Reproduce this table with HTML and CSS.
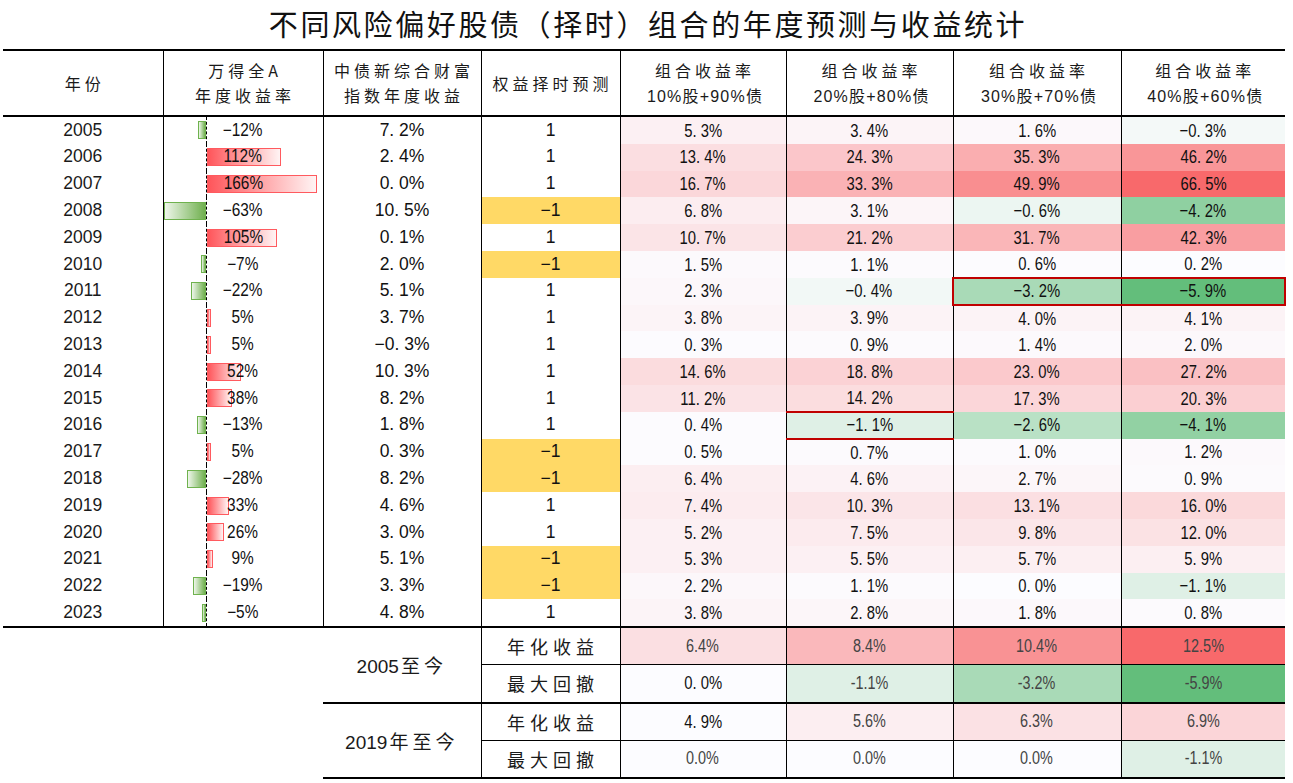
FILE: index.html
```html
<!DOCTYPE html>
<html lang="zh-CN">
<head>
<meta charset="utf-8">
<title>不同风险偏好股债（择时）组合的年度预测与收益统计</title>
<link rel="stylesheet" href="styles.css">
</head>
<body>
<div class="page">
  <h1 class="title">不同风险偏好股债（择时）组合的年度预测与收益统计</h1>
  <table class="grid">
    <colgroup>
      <col class="c1"><col class="c2"><col class="c3"><col class="c4"><col class="c5"><col class="c6"><col class="c7"><col class="c8">
    </colgroup>
    <thead>
      <tr class="head">
        <th class="first">年份</th>
        <th>万得全A<br>年度收益率</th>
        <th>中债新综合财富<br>指数年度收益</th>
        <th>权益择时预测</th>
        <th>组合收益率<br><span class="mix">10%股+90%债</span></th>
        <th>组合收益率<br><span class="mix">20%股+80%债</span></th>
        <th>组合收益率<br><span class="mix">30%股+70%债</span></th>
        <th>组合收益率<br><span class="mix">40%股+60%债</span></th>
      </tr>
    </thead>
    <tbody class="data">
      <tr><td class="yr">2005</td><td class="bar"><div class="bc"><i class="neg" style="width:8px"></i><i class="ax"></i><span class="bl">−12%</span></div></td><td class="bd">7. 2%</td><td class="sg">1</td>
        <td class="h" style="background:rgb(252,240,243)"><span class="n">5. 3%</span></td><td class="h" style="background:rgb(252,244,247)"><span class="n">3. 4%</span></td><td class="h" style="background:rgb(252,248,251)"><span class="n">1. 6%</span></td><td class="h" style="background:rgb(244,249,248)"><span class="n">−0. 3%</span></td></tr>
      <tr><td class="yr">2006</td><td class="bar"><div class="bc"><i class="ax"></i><i class="pos" style="width:74px"></i><span class="bl">112%</span></div></td><td class="bd">2. 4%</td><td class="sg">1</td>
        <td class="h" style="background:rgb(251,222,225)"><span class="n">13. 4%</span></td><td class="h" style="background:rgb(251,198,202)"><span class="n">24. 3%</span></td><td class="h" style="background:rgb(250,174,176)"><span class="n">35. 3%</span></td><td class="h" style="background:rgb(249,150,152)"><span class="n">46. 2%</span></td></tr>
      <tr><td class="yr">2007</td><td class="bar"><div class="bc"><i class="ax"></i><i class="pos" style="width:110px"></i><span class="bl">166%</span></div></td><td class="bd">0. 0%</td><td class="sg">1</td>
        <td class="h" style="background:rgb(251,215,218)"><span class="n">16. 7%</span></td><td class="h" style="background:rgb(250,178,181)"><span class="n">33. 3%</span></td><td class="h" style="background:rgb(249,142,144)"><span class="n">49. 9%</span></td><td class="h" style="background:rgb(248,105,107)"><span class="n">66. 5%</span></td></tr>
      <tr><td class="yr">2008</td><td class="bar"><div class="bc"><i class="neg" style="width:42px"></i><i class="ax"></i><span class="bl">−63%</span></div></td><td class="bd">10. 5%</td><td class="sg down">−1</td>
        <td class="h" style="background:rgb(252,237,240)"><span class="n">6. 8%</span></td><td class="h" style="background:rgb(252,245,248)"><span class="n">3. 1%</span></td><td class="h" style="background:rgb(236,246,242)"><span class="n">−0. 6%</span></td><td class="h" style="background:rgb(143,208,161)"><span class="n">−4. 2%</span></td></tr>
      <tr><td class="yr">2009</td><td class="bar"><div class="bc"><i class="ax"></i><i class="pos" style="width:70px"></i><span class="bl">105%</span></div></td><td class="bd">0. 1%</td><td class="sg">1</td>
        <td class="h" style="background:rgb(251,228,231)"><span class="n">10. 7%</span></td><td class="h" style="background:rgb(251,205,208)"><span class="n">21. 2%</span></td><td class="h" style="background:rgb(250,182,184)"><span class="n">31. 7%</span></td><td class="h" style="background:rgb(249,158,161)"><span class="n">42. 3%</span></td></tr>
      <tr><td class="yr">2010</td><td class="bar"><div class="bc"><i class="neg" style="width:5px"></i><i class="ax"></i><span class="bl">−7%</span></div></td><td class="bd">2. 0%</td><td class="sg down">−1</td>
        <td class="h" style="background:rgb(252,249,252)"><span class="n">1. 5%</span></td><td class="h" style="background:rgb(252,250,253)"><span class="n">1. 1%</span></td><td class="h" style="background:rgb(252,251,254)"><span class="n">0. 6%</span></td><td class="h" style="background:rgb(252,252,255)"><span class="n">0. 2%</span></td></tr>
      <tr><td class="yr">2011</td><td class="bar"><div class="bc"><i class="neg" style="width:15px"></i><i class="ax"></i><span class="bl">−22%</span></div></td><td class="bd">5. 1%</td><td class="sg">1</td>
        <td class="h" style="background:rgb(252,247,250)"><span class="n">2. 3%</span></td><td class="h" style="background:rgb(242,248,246)"><span class="n">−0. 4%</span></td><td class="h mark-l" style="background:rgb(169,218,183)"><span class="n">−3. 2%</span></td><td class="h mark-r" style="background:rgb(99,190,123)"><span class="n">−5. 9%</span></td></tr>
      <tr><td class="yr">2012</td><td class="bar"><div class="bc"><i class="ax"></i><i class="pos" style="width:4px"></i><span class="bl">5%</span></div></td><td class="bd">3. 7%</td><td class="sg">1</td>
        <td class="h" style="background:rgb(252,244,247)"><span class="n">3. 8%</span></td><td class="h" style="background:rgb(252,243,246)"><span class="n">3. 9%</span></td><td class="h" style="background:rgb(252,243,246)"><span class="n">4. 0%</span></td><td class="h" style="background:rgb(252,243,246)"><span class="n">4. 1%</span></td></tr>
      <tr><td class="yr">2013</td><td class="bar"><div class="bc"><i class="ax"></i><i class="pos" style="width:4px"></i><span class="bl">5%</span></div></td><td class="bd">−0. 3%</td><td class="sg">1</td>
        <td class="h" style="background:rgb(252,251,254)"><span class="n">0. 3%</span></td><td class="h" style="background:rgb(252,250,253)"><span class="n">0. 9%</span></td><td class="h" style="background:rgb(252,249,252)"><span class="n">1. 4%</span></td><td class="h" style="background:rgb(252,248,251)"><span class="n">2. 0%</span></td></tr>
      <tr><td class="yr">2014</td><td class="bar"><div class="bc"><i class="ax"></i><i class="pos" style="width:34px"></i><span class="bl">52%</span></div></td><td class="bd">10. 3%</td><td class="sg">1</td>
        <td class="h" style="background:rgb(251,220,222)"><span class="n">14. 6%</span></td><td class="h" style="background:rgb(251,210,213)"><span class="n">18. 8%</span></td><td class="h" style="background:rgb(251,201,204)"><span class="n">23. 0%</span></td><td class="h" style="background:rgb(250,192,195)"><span class="n">27. 2%</span></td></tr>
      <tr><td class="yr">2015</td><td class="bar"><div class="bc"><i class="ax"></i><i class="pos" style="width:25px"></i><span class="bl">38%</span></div></td><td class="bd">8. 2%</td><td class="sg">1</td>
        <td class="h" style="background:rgb(251,227,230)"><span class="n">11. 2%</span></td><td class="h" style="background:rgb(251,221,223)"><span class="n">14. 2%</span></td><td class="h" style="background:rgb(251,214,217)"><span class="n">17. 3%</span></td><td class="h" style="background:rgb(251,207,210)"><span class="n">20. 3%</span></td></tr>
      <tr><td class="yr">2016</td><td class="bar"><div class="bc"><i class="neg" style="width:9px"></i><i class="ax"></i><span class="bl">−13%</span></div></td><td class="bd">1. 8%</td><td class="sg">1</td>
        <td class="h" style="background:rgb(252,251,254)"><span class="n">0. 4%</span></td><td class="h mark-tb" style="background:rgb(223,240,230)"><span class="n">−1. 1%</span></td><td class="h" style="background:rgb(185,225,197)"><span class="n">−2. 6%</span></td><td class="h" style="background:rgb(146,209,163)"><span class="n">−4. 1%</span></td></tr>
      <tr><td class="yr">2017</td><td class="bar"><div class="bc"><i class="ax"></i><i class="pos" style="width:4px"></i><span class="bl">5%</span></div></td><td class="bd">0. 3%</td><td class="sg down">−1</td>
        <td class="h" style="background:rgb(252,251,254)"><span class="n">0. 5%</span></td><td class="h" style="background:rgb(252,250,253)"><span class="n">0. 7%</span></td><td class="h" style="background:rgb(252,250,253)"><span class="n">1. 0%</span></td><td class="h" style="background:rgb(252,249,252)"><span class="n">1. 2%</span></td></tr>
      <tr><td class="yr">2018</td><td class="bar"><div class="bc"><i class="neg" style="width:19px"></i><i class="ax"></i><span class="bl">−28%</span></div></td><td class="bd">8. 2%</td><td class="sg down">−1</td>
        <td class="h" style="background:rgb(252,238,241)"><span class="n">6. 4%</span></td><td class="h" style="background:rgb(252,242,245)"><span class="n">4. 6%</span></td><td class="h" style="background:rgb(252,246,249)"><span class="n">2. 7%</span></td><td class="h" style="background:rgb(252,250,253)"><span class="n">0. 9%</span></td></tr>
      <tr><td class="yr">2019</td><td class="bar"><div class="bc"><i class="ax"></i><i class="pos" style="width:22px"></i><span class="bl">33%</span></div></td><td class="bd">4. 6%</td><td class="sg">1</td>
        <td class="h" style="background:rgb(252,236,239)"><span class="n">7. 4%</span></td><td class="h" style="background:rgb(251,229,232)"><span class="n">10. 3%</span></td><td class="h" style="background:rgb(251,223,226)"><span class="n">13. 1%</span></td><td class="h" style="background:rgb(251,217,219)"><span class="n">16. 0%</span></td></tr>
      <tr><td class="yr">2020</td><td class="bar"><div class="bc"><i class="ax"></i><i class="pos" style="width:17px"></i><span class="bl">26%</span></div></td><td class="bd">3. 0%</td><td class="sg">1</td>
        <td class="h" style="background:rgb(252,240,243)"><span class="n">5. 2%</span></td><td class="h" style="background:rgb(252,235,238)"><span class="n">7. 5%</span></td><td class="h" style="background:rgb(251,230,233)"><span class="n">9. 8%</span></td><td class="h" style="background:rgb(251,226,228)"><span class="n">12. 0%</span></td></tr>
      <tr><td class="yr">2021</td><td class="bar"><div class="bc"><i class="ax"></i><i class="pos" style="width:6px"></i><span class="bl">9%</span></div></td><td class="bd">5. 1%</td><td class="sg down">−1</td>
        <td class="h" style="background:rgb(252,240,243)"><span class="n">5. 3%</span></td><td class="h" style="background:rgb(252,240,243)"><span class="n">5. 5%</span></td><td class="h" style="background:rgb(252,239,242)"><span class="n">5. 7%</span></td><td class="h" style="background:rgb(252,239,242)"><span class="n">5. 9%</span></td></tr>
      <tr><td class="yr">2022</td><td class="bar"><div class="bc"><i class="neg" style="width:13px"></i><i class="ax"></i><span class="bl">−19%</span></div></td><td class="bd">3. 3%</td><td class="sg down">−1</td>
        <td class="h" style="background:rgb(252,247,250)"><span class="n">2. 2%</span></td><td class="h" style="background:rgb(252,250,253)"><span class="n">1. 1%</span></td><td class="h" style="background:rgb(252,252,255)"><span class="n">0. 0%</span></td><td class="h" style="background:rgb(223,240,230)"><span class="n">−1. 1%</span></td></tr>
      <tr><td class="yr">2023</td><td class="bar"><div class="bc"><i class="neg" style="width:4px"></i><i class="ax"></i><span class="bl">−5%</span></div></td><td class="bd">4. 8%</td><td class="sg">1</td>
        <td class="h" style="background:rgb(252,244,247)"><span class="n">3. 8%</span></td><td class="h" style="background:rgb(252,246,249)"><span class="n">2. 8%</span></td><td class="h" style="background:rgb(252,248,251)"><span class="n">1. 8%</span></td><td class="h" style="background:rgb(252,250,253)"><span class="n">0. 8%</span></td></tr>
    </tbody>
    <tbody class="sum">
      <tr>
        <td class="blank" colspan="2" rowspan="4"></td>
        <td class="period" rowspan="2">2005<span class="cj">至今</span></td>
        <td class="lab">年化收益</td>
        <td class="sv" style="background:rgb(251,223,226)"><span class="n soft">6.4%</span></td>
        <td class="sv" style="background:rgb(250,184,187)"><span class="n soft">8.4%</span></td>
        <td class="sv" style="background:rgb(249,146,148)"><span class="n soft">10.4%</span></td>
        <td class="sv" style="background:rgb(248,105,107)"><span class="n soft">12.5%</span></td>
      </tr>
      <tr class="end">
        <td class="lab">最大回撤</td>
        <td class="sv" style="background:rgb(252,252,255)"><span class="n">0. 0%</span></td>
        <td class="sv" style="background:rgb(223,240,230)"><span class="n soft">-1.1%</span></td>
        <td class="sv" style="background:rgb(169,218,183)"><span class="n soft">-3.2%</span></td>
        <td class="sv" style="background:rgb(99,190,123)"><span class="n soft">-5.9%</span></td>
      </tr>
      <tr>
        <td class="period" rowspan="2">2019<span class="cj">年至今</span></td>
        <td class="lab">年化收益</td>
        <td class="sv" style="background:rgb(252,252,255)"><span class="n">4. 9%</span></td>
        <td class="sv" style="background:rgb(252,238,241)"><span class="n soft">5.6%</span></td>
        <td class="sv" style="background:rgb(251,225,228)"><span class="n soft">6.3%</span></td>
        <td class="sv" style="background:rgb(251,213,216)"><span class="n soft">6.9%</span></td>
      </tr>
      <tr class="end">
        <td class="lab">最大回撤</td>
        <td class="sv" style="background:rgb(252,252,255)"><span class="n soft">0.0%</span></td>
        <td class="sv" style="background:rgb(252,252,255)"><span class="n soft">0.0%</span></td>
        <td class="sv" style="background:rgb(252,252,255)"><span class="n soft">0.0%</span></td>
        <td class="sv" style="background:rgb(223,240,230)"><span class="n soft">-1.1%</span></td>
      </tr>
    </tbody>
  </table>
</div>
</body>
</html>
```

FILE: styles.css
```css
html, body {
  margin: 0;
  background: #ffffff;
}

body {
  font-family: "Liberation Sans", "Noto Sans CJK SC", sans-serif;
  color: #1a1a1a;
}

.page {
  padding-left: 3px;
}

.title {
  margin: 0;
  height: 49px;
  box-sizing: border-box;
  padding-bottom: 4px;
  display: flex;
  align-items: center;
  justify-content: center;
  font-family: "Noto Sans CJK SC", sans-serif;
  font-weight: normal;
  font-size: 29px;
  letter-spacing: 2.6px;
  color: #111;
}

.grid {
  width: 1282px;
  table-layout: fixed;
  border-collapse: collapse;
  border-spacing: 0;
}

.c1 { width: 160px; }
.c2 { width: 160px; }
.c3 { width: 158px; }
.c4 { width: 139px; }
.c5 { width: 166px; }
.c6 { width: 167px; }
.c7 { width: 168px; }
.c8 { width: 164px; }

td, th {
  padding: 0;
  text-align: center;
  vertical-align: middle;
}

/* header */
.head {
  height: 66px;
  border-top: 2px solid #000;
  border-bottom: 2px solid #000;
}

.head th {
  font-family: "Noto Sans CJK SC", sans-serif;
  font-weight: normal;
  font-size: 16px;
  line-height: 25px;
  letter-spacing: 4px;
  padding-left: 4px;
  color: #1a1a1a;
  border-left: 1px solid #000;
}

.head th.first {
  border-left: none;
}

.head .mix {
  font-family: "Liberation Sans", "Noto Sans CJK SC", sans-serif;
  letter-spacing: 1.2px;
}

/* data rows */
.data tr {
  height: 26.8px;
}

.data tr:last-child {
  border-bottom: 2px solid #000;
}

.data td {
  font-size: 17.5px;
  line-height: 1;
  color: #111;
  border-left: 1px solid #000;
}

.data td.yr {
  border-left: none;
  font-size: 17.5px;
  color: #1a1a1a;
}

.sg.down {
  background: #ffd966;
}

.n {
  display: inline-block;
  font-size: 19px;
  transform: scaleX(0.78);
  color: #111;
}

.n.soft {
  font-size: 18px;
  transform: scaleX(0.8);
  color: #444;
}

.h {
  white-space: nowrap;
}

/* bar column */
.bc {
  display: grid;
  grid-template-columns: 42px 1px 1fr;
  height: 26.8px;
  align-items: center;
}

.bc .neg,
.bc .pos,
.bc .ax,
.bc .bl {
  grid-row: 1;
}

.neg {
  grid-column: 1;
  justify-self: end;
  height: 18px;
  box-sizing: border-box;
  border: 1px solid #6fb24e;
  background: linear-gradient(to right, #eef6ea, #70b04f);
}

.pos {
  grid-column: 3;
  justify-self: start;
  height: 18px;
  box-sizing: border-box;
  border: 1px solid #ff5a5f;
  background: linear-gradient(to right, #ff555a, #fff4f4);
}

.ax {
  grid-column: 2;
  align-self: stretch;
  border-left: 1px dashed #000;
}

.bl {
  grid-column: 1 / -1;
  justify-self: center;
  display: inline-block;
  font-size: 17.5px;
  transform: scaleX(0.88);
  color: #111;
  position: relative;
}

/* highlighted boxes */
.mark-l {
  border-top: 2px solid #c00000;
  border-bottom: 2px solid #c00000;
  border-left: 2px solid #c00000 !important;
}

.mark-r {
  border-top: 2px solid #c00000;
  border-bottom: 2px solid #c00000;
  border-right: 2px solid #c00000;
}

.mark-tb {
  border-top: 2px solid #c00000;
  border-bottom: 2px solid #c00000;
}

/* summary */
.sum tr {
  height: 37.7px;
}

.sum td {
  border-bottom: 1px solid #000;
}

.sum tr.end td {
  border-bottom: 2px solid #000;
}

.sum td.blank {
  border: none;
}

.sum td.period {
  border-bottom: 2px solid #000;
  font-family: "Liberation Sans", "Noto Sans CJK SC", sans-serif;
  font-size: 19px;
  color: #1a1a1a;
}

.period .cj {
  font-family: "Noto Sans CJK SC", sans-serif;
  letter-spacing: 4px;
  padding-left: 2px;
}

.lab {
  font-family: "Noto Sans CJK SC", sans-serif;
  font-size: 18px;
  letter-spacing: 5px;
  padding-left: 5px;
  color: #1a1a1a;
  border-left: 1px solid #000;
}

.sv {
  border-left: 1px solid #000;
}
```
